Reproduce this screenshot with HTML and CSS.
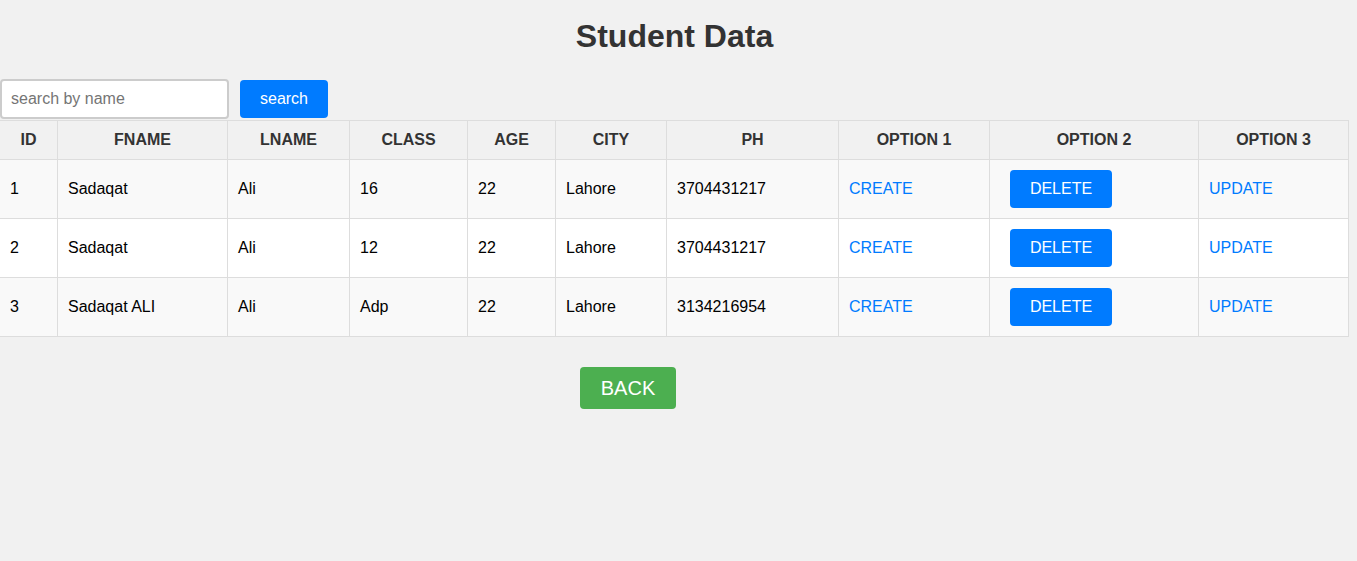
FILE: index.html
```html
<!DOCTYPE html>
<html>
<head>
<meta charset="utf-8">
<title>Student Data</title>
<link rel="stylesheet" href="styles.css">
</head>
<body>
<div class="page">
  <h1 class="title">Student Data</h1>
  <form class="search-bar">
    <input class="search-input" type="text" placeholder="search by name">
    <button class="search-btn" type="button">search</button>
  </form>
  <table class="data-table">
    <colgroup>
      <col class="c-id"><col class="c-fname"><col class="c-lname"><col class="c-class"><col class="c-age"><col class="c-city"><col class="c-ph"><col class="c-o1"><col class="c-o2"><col class="c-o3">
    </colgroup>
    <thead>
      <tr>
        <th>ID</th><th>FNAME</th><th>LNAME</th><th>CLASS</th><th>AGE</th><th>CITY</th><th>PH</th><th>OPTION 1</th><th>OPTION 2</th><th>OPTION 3</th>
      </tr>
    </thead>
    <tbody>
      <tr>
        <td>1</td><td>Sadaqat</td><td>Ali</td><td>16</td><td>22</td><td>Lahore</td><td>3704431217</td>
        <td><a class="link" href="#">CREATE</a></td>
        <td><button class="del-btn" type="button">DELETE</button></td>
        <td><a class="link" href="#">UPDATE</a></td>
      </tr>
      <tr>
        <td>2</td><td>Sadaqat</td><td>Ali</td><td>12</td><td>22</td><td>Lahore</td><td>3704431217</td>
        <td><a class="link" href="#">CREATE</a></td>
        <td><button class="del-btn" type="button">DELETE</button></td>
        <td><a class="link" href="#">UPDATE</a></td>
      </tr>
      <tr>
        <td>3</td><td>Sadaqat ALI</td><td>Ali</td><td>Adp</td><td>22</td><td>Lahore</td><td>3134216954</td>
        <td><a class="link" href="#">CREATE</a></td>
        <td><button class="del-btn" type="button">DELETE</button></td>
        <td><a class="link" href="#">UPDATE</a></td>
      </tr>
    </tbody>
  </table>
  <div class="back-row">
    <button class="back-btn" type="button">BACK</button>
  </div>
</div>
</body>
</html>
```
FILE: styles.css
```css
html, body {
  margin: 0;
  padding: 0;
  background: #f1f1f1;
  font-family: "Liberation Sans", Arial, sans-serif;
  color: #000;
}

.page {
  width: 1349px;
}

.title {
  margin: 18px 0 24px;
  text-align: center;
  font-size: 32px;
  font-weight: bold;
  color: #333;
  line-height: 37px;
}

.search-bar {
  display: flex;
  align-items: center;
  gap: 11px;
  margin: 0;
}

.search-input {
  box-sizing: border-box;
  width: 229px;
  height: 40px;
  padding: 0 9px;
  border: 2px solid #ccc;
  border-radius: 4px;
  background: #fff;
  font-family: "Liberation Sans", Arial, sans-serif;
  font-size: 16px;
  color: #333;
  outline: none;
}

.search-input::placeholder {
  color: #757575;
}

.search-btn {
  box-sizing: border-box;
  width: 88px;
  height: 38px;
  border: none;
  border-radius: 4px;
  background: #007bff;
  color: #fff;
  font-family: "Liberation Sans", Arial, sans-serif;
  font-size: 16px;
  cursor: pointer;
}

.data-table {
  margin: 1px 0 0 -1px;
  width: 1349px;
  table-layout: fixed;
  border-collapse: collapse;
  font-size: 16px;
}

.c-id { width: 58px; }
.c-fname { width: 170px; }
.c-lname { width: 122px; }
.c-class { width: 118px; }
.c-age { width: 88px; }
.c-city { width: 111px; }
.c-ph { width: 172px; }
.c-o1 { width: 151px; }
.c-o2 { width: 209px; }
.c-o3 { width: 150px; }

.data-table th,
.data-table td {
  border: 1px solid #ddd;
  padding: 10px;
  line-height: 18px;
  text-align: left;
}

.data-table th {
  background: #f1f1f1;
  color: #333;
  font-weight: bold;
  text-align: center;
}

.data-table tbody tr:nth-child(odd) {
  background: #f9f9f9;
}

.data-table tbody tr:nth-child(even) {
  background: #fff;
}

.link {
  color: #007bff;
  text-decoration: none;
}

.del-btn {
  box-sizing: border-box;
  margin-left: 10px;
  width: 102px;
  height: 38px;
  border: none;
  border-radius: 4px;
  background: #007bff;
  color: #fff;
  font-family: "Liberation Sans", Arial, sans-serif;
  font-size: 16px;
  vertical-align: middle;
  cursor: pointer;
}

.back-row {
  padding: 30px 0 0 580px;
}

.back-btn {
  box-sizing: border-box;
  width: 96px;
  height: 42px;
  border: none;
  border-radius: 4px;
  background: #4caf50;
  color: #fff;
  font-family: "Liberation Sans", Arial, sans-serif;
  font-size: 20px;
  cursor: pointer;
}
```
